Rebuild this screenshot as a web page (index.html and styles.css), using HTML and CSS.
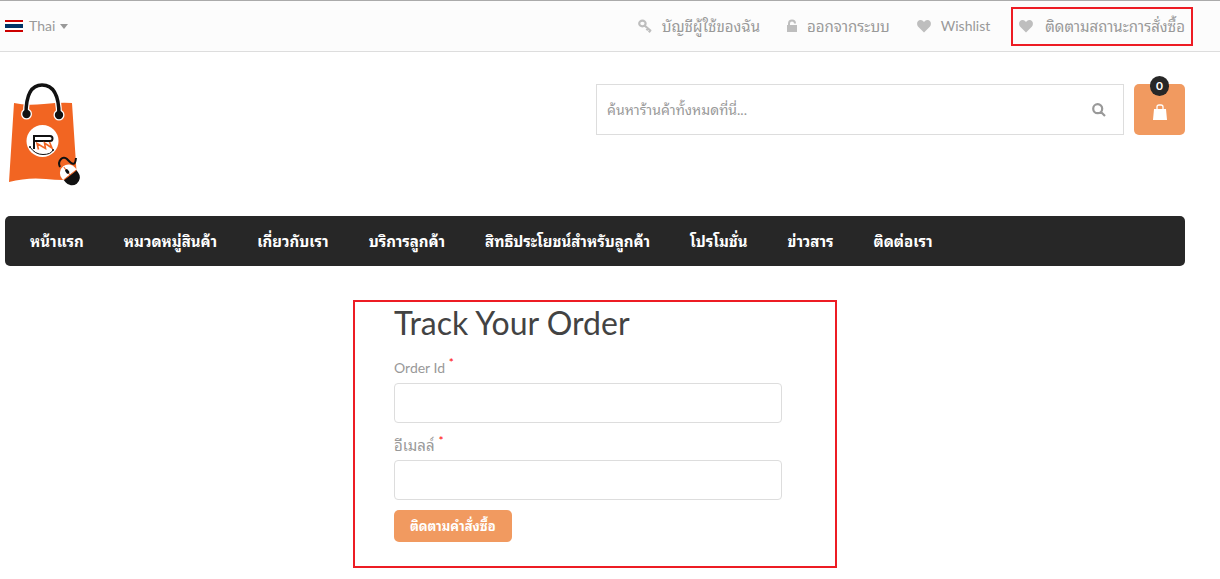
FILE: index.html
```
<!DOCTYPE html>
<html lang="th">

<head>
    <meta charset="UTF-8">
    <meta name="viewport" content="width=device-width, initial-scale=1.0">
    <title>Track Your Order</title>
    <link rel="stylesheet" href="styles.css">
</head>

<body>
    <div class="topbar">
        <button type="button" class="language">
            <svg class="flag" viewBox="0 0 18 12" aria-hidden="true">
                <rect width="18" height="12" fill="#fff"/>
                <rect width="18" height="2" fill="#c00"/>
                <rect y="4" width="18" height="4" fill="#003366"/>
                <rect y="10" width="18" height="2" fill="#c00"/>
            </svg>
            Thai
            <span class="caret"></span>
        </button>
        <div class="top-links">
            <a href="#" class="thai">
                <svg class="icon" viewBox="0 0 14 14" aria-hidden="true">
                    <path d="M1.200 4.500a3.200 2.800 0 1 0 6.400 0a3.200 2.800 0 1 0-6.400 0M6.500 6.500l6.500 5.500M8.500 11.200l1.700-2M10.800 13.200l1.700-2" fill="none" stroke="#bebebe" stroke-width="2.200"/>
                </svg>
                บัญชีผู้ใช้ของฉัน
            </a>
            <a href="#" class="thai">
                <svg class="icon icon-lock" viewBox="0 0 10 14" aria-hidden="true">
                    <path d="M0 6h10v7H0z" fill="#bebebe"/>
                    <path d="M2 7V4.500a3 3 0 0 1 6 0" fill="none" stroke="#bebebe" stroke-width="2"/>
                </svg>
                ออกจากระบบ
            </a>
            <a href="#">
                <svg class="icon" viewBox="0 0 14 13" aria-hidden="true">
                    <path d="M7 13L1 7C-.8 4.800 0 .5 3.600.5 5.400.5 6.500 1.700 7 2.600 7.500 1.700 8.600.5 10.400.5 14 .5 14.800 4.800 13 7z" fill="#bebebe"/>
                </svg>
                Wishlist
            </a>
            <a href="#" class="thai marked">
                <svg class="icon" viewBox="0 0 14 13" aria-hidden="true">
                    <path d="M7 13L1 7C-.8 4.800 0 .5 3.600.5 5.400.5 6.500 1.700 7 2.600 7.500 1.700 8.600.5 10.400.5 14 .5 14.800 4.800 13 7z" fill="#bebebe"/>
                </svg>
                ติดตามสถานะการสั่งซื้อ
            </a>
        </div>
    </div>

    <div class="container">
        <header class="header">
            <a href="#" class="logo" aria-label="Home">
                <svg viewBox="0 0 74 106" aria-hidden="true">
                    <path d="M6 22Q18 25 36 23T64 22L69 98Q56 100 38 98T1 101z" fill="#f26522"/>
                    <circle cx="18.500" cy="33" r="5.500" fill="#fff"/>
                    <circle cx="51" cy="34" r="5.500" fill="#fff"/>
                    <path d="M18 33C18 16 22 4 34 4S51 16 51 34" fill="none" stroke="#fff" stroke-width="6"/>
                    <path d="M18 33C18 16 22 4 34 4S51 16 51 34" fill="none" stroke="#111" stroke-width="3.500"/>
                    <circle cx="18.500" cy="33" r="4.200" fill="#111"/>
                    <circle cx="51" cy="34" r="4.200" fill="#111"/>
                    <circle cx="34.500" cy="60" r="16" fill="#fff"/>
                    <path d="M26 68V55H42Q44.500 55 44.500 57.500T42 60H27" fill="none" stroke="#111" stroke-width="2"/>
                    <path d="M30.500 68.500L29 62.500 37.500 67.500 36.500 62 44 67 41.500 61" fill="none" stroke="#f26522" stroke-width="1.600"/>
                    <path d="M22 66Q27 73.500 35 73.500T45 69" fill="none" stroke="#111" stroke-width="1"/>
                    <circle cx="22" cy="66" r="1" fill="#111"/>
                    <circle cx="45" cy="69" r="1" fill="#111"/>
                    <path d="M52 86C49 80 55 74 59 78S67 87 68 77" fill="none" stroke="#111" stroke-width="2"/>
                    <g transform="rotate(-38 62 94)">
                        <rect x="53.500" y="83" width="17" height="22" rx="8.500" fill="#fff"/>
                        <path d="M54 94h16v3a8 8 0 0 1-16 0z" fill="#111"/>
                        <path d="M62 84v10M54 94h16" stroke="#f26522" stroke-width="1"/>
                        <rect x="60.500" y="87" width="3" height="5" rx="1.500" fill="#111"/>
                    </g>
                </svg>
            </a>
            <form class="search">
                <input type="text" aria-label="ค้นหา" placeholder="ค้นหาร้านค้าทั้งหมดที่นี่...">
                <button type="submit" aria-label="ค้นหา">
                    <svg viewBox="0 0 14 14" aria-hidden="true">
                        <path d="M1.200 5.700a4.500 4.500 0 1 0 9 0a4.500 4.500 0 1 0-9 0M9 9l4 4" fill="none" stroke="#999" stroke-width="2.200"/>
                    </svg>
                </button>
            </form>
            <a href="#" class="cart" aria-label="Cart">
                <svg viewBox="0 0 14 16" aria-hidden="true">
                    <path d="M1 5h12l1 11H0z" fill="#fff"/>
                    <path d="M4 6V3q0-2 2-2h2q2 0 2 2v3" fill="none" stroke="#fff" stroke-width="1.300"/>
                </svg>
                <span class="count">0</span>
            </a>
        </header>

        <nav class="menu">
            <a href="#">หน้าแรก</a>
            <a href="#">หมวดหมู่สินค้า</a>
            <a href="#">เกี่ยวกับเรา</a>
            <a href="#">บริการลูกค้า</a>
            <a href="#">สิทธิประโยชน์สำหรับลูกค้า</a>
            <a href="#">โปรโมชั่น</a>
            <a href="#">ข่าวสาร</a>
            <a href="#">ติดต่อเรา</a>
        </nav>

        <form class="track">
            <h1>Track Your Order</h1>
            <label for="orderId">Order Id <span class="required">*</span></label>
            <input type="text" id="orderId">
            <label for="email" class="thai">อีเมลล์ <span class="required">*</span></label>
            <input type="email" id="email">
            <button type="submit">ติดตามคำสั่งซื้อ</button>
        </form>
    </div>
</body>

</html>
```
FILE: styles.css
```
* {
    box-sizing: border-box;
}

body {
    margin: 0;
    background-color: #fff;
    color: #999;
    font-family: Lato, "Noto Sans Thai Looped", Loma, Waree, "Noto Sans", sans-serif;
    font-size: 14px;
    line-height: 20px;
}

a {
    color: inherit;
    text-decoration: none;
}

input,
button {
    font: inherit;
    color: inherit;
}

svg {
    display: block;
}

.thai {
    font-size: 15px;
}

.topbar {
    display: flex;
    justify-content: space-between;
    align-items: center;
    height: 52px;
    padding: 0 27px 0 5px;
    border-top: 1px solid #aaa;
    border-bottom: 1px solid #ddd;
    background-color: #fcfcfc;
}

.language {
    display: flex;
    align-items: center;
    gap: 6px;
    padding: 0;
    border: none;
    background: none;
}

.flag {
    width: 18px;
    height: 12px;
}

.caret {
    margin-left: -1px;
    border: 4px solid transparent;
    border-top-width: 5px;
    border-top-color: #999;
    border-bottom: none;
}

.top-links {
    display: flex;
    align-items: center;
    gap: 27px;
}

.top-links a {
    display: flex;
    align-items: center;
    gap: 10px;
}

.icon {
    width: 14px;
    height: 14px;
}

.icon-lock {
    width: 10px;
}

.top-links .marked {
    height: 39px;
    margin-left: -6px;
    padding: 0 6px;
    gap: 12px;
    border: 2px solid #ed1c24;
}

.container {
    padding: 0 35px 0 5px;
}

.header {
    display: flex;
    align-items: flex-start;
    gap: 10px;
    height: 164px;
    padding-top: 32px;
}

.logo {
    margin-right: auto;
    padding-left: 3px;
}

.logo svg {
    width: 74px;
    height: 106px;
    margin-top: -3px;
}

.search {
    display: flex;
    flex: 0 1 528px;
    height: 51px;
    border: 1px solid #ddd;
}

.search input {
    flex: 1;
    min-width: 0;
    padding: 0 10px;
    border: none;
    outline: none;
    background: none;
}

.search input::placeholder {
    color: #999;
}

.search button {
    padding: 0 17px;
    border: none;
    background: none;
}

.search svg {
    width: 14px;
    height: 14px;
}

.cart {
    position: relative;
    display: flex;
    justify-content: center;
    align-items: center;
    width: 51px;
    height: 51px;
    padding-top: 4px;
    border-radius: 5px;
    background-color: #f19a60;
}

.cart svg {
    width: 14px;
    height: 16px;
}

.count {
    position: absolute;
    top: -8px;
    left: 16px;
    width: 19px;
    border-radius: 10px;
    background-color: #272727;
    color: #fff;
    font-size: 12px;
    font-weight: bold;
    text-align: center;
}

.menu {
    display: flex;
    gap: 40px;
    padding: 15px 25px;
    border-radius: 5px;
    background-color: #272727;
    color: #fff;
    font-size: 15px;
    font-weight: bold;
    white-space: nowrap;
}

.track {
    display: flex;
    flex-direction: column;
    align-items: flex-start;
    width: 484px;
    max-width: 100%;
    margin: 34px auto 0;
    padding: 3px 53px 24px 39px;
    border: 2px solid #ed1c24;
}

.track h1 {
    margin: 0 0 17px;
    color: #434343;
    font-size: 32px;
    font-weight: normal;
    line-height: 36px;
}

.track label {
    margin-bottom: 5px;
}

.track input {
    width: 100%;
    height: 40px;
    margin-bottom: 12px;
    padding: 0 10px;
    border: 1px solid #ddd;
    border-radius: 4px;
}

.required {
    color: #f00;
    font-size: 12px;
    line-height: 0;
    vertical-align: super;
}

.track button {
    height: 32px;
    margin-top: -2px;
    padding: 0 16px;
    border: none;
    border-radius: 5px;
    background-color: #f19a60;
    color: #fff;
    font-size: 13px;
    font-weight: bold;
}
```
